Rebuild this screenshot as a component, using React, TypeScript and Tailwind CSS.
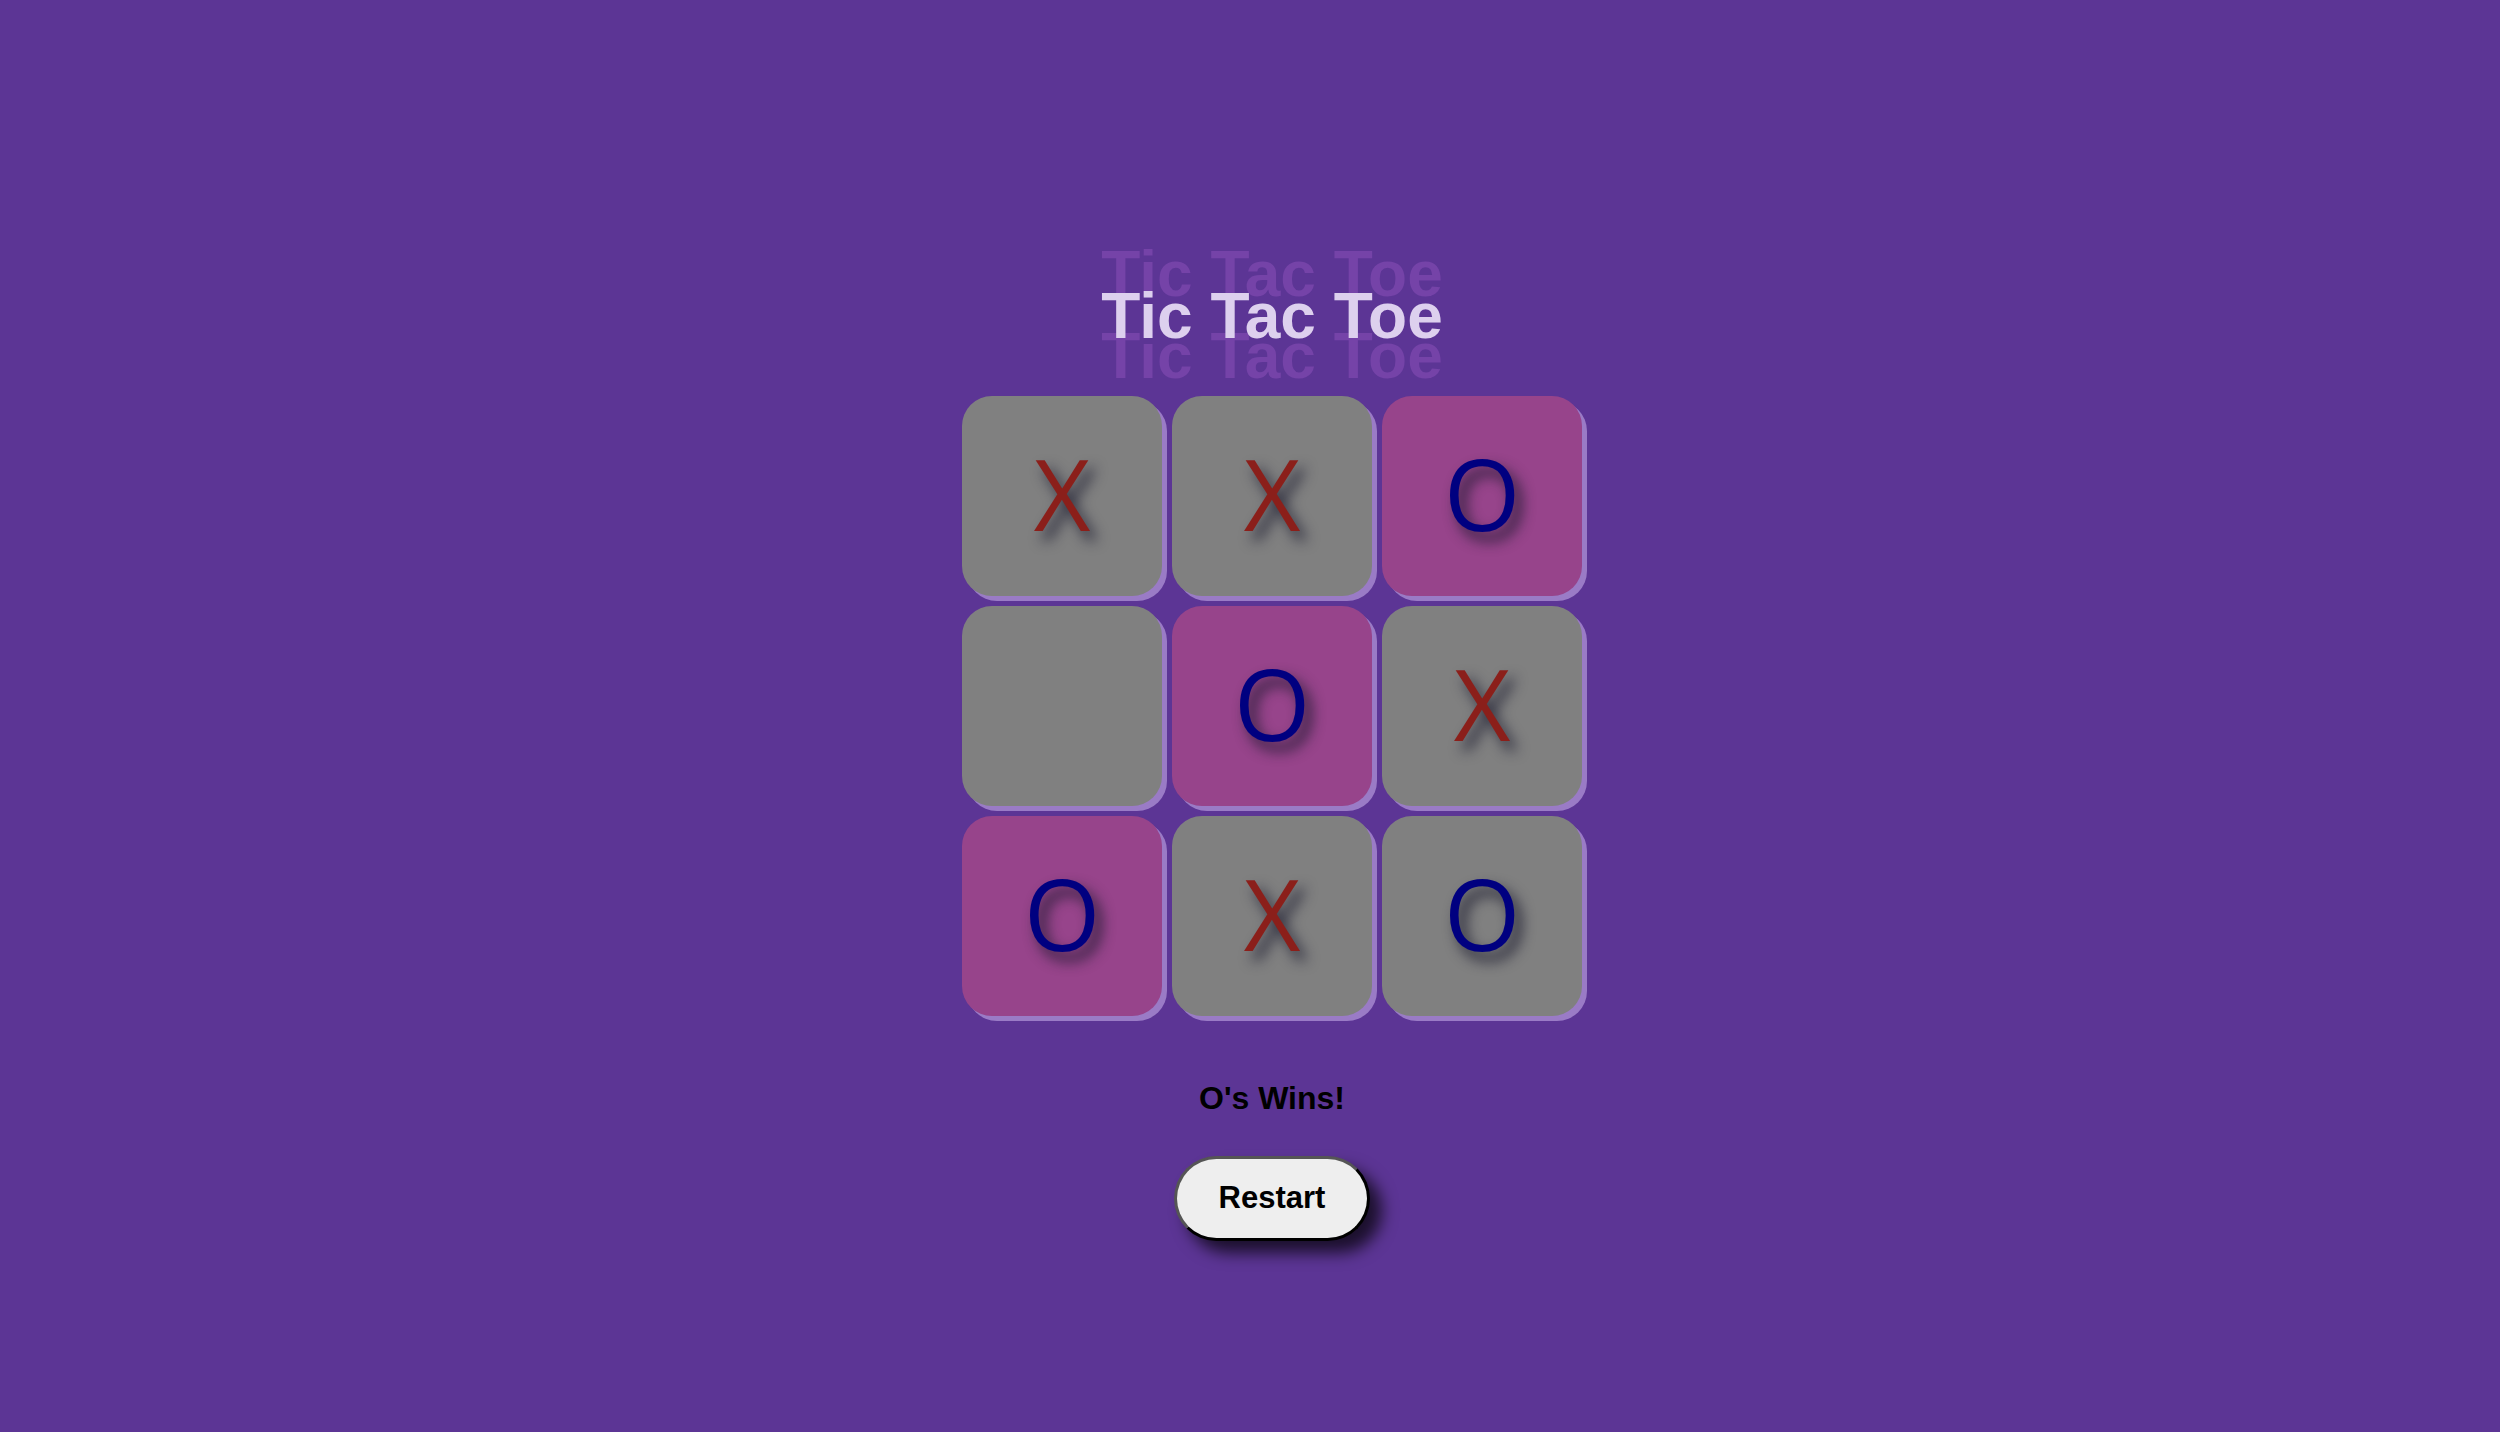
const board: (string | null)[] = ["X", "X", "O", null, "O", "X", "O", "X", "O"];
const winLine = [2, 4, 6];

function Cell({ value, win }: { value: string | null; win: boolean }) {
  return (
    <button
      className={`flex h-[200px] w-[200px] items-center justify-center rounded-[30px] pb-[6px] shadow-[5px_5px_0_#9a7bc6] ${
        win ? "bg-[#97448b]" : "bg-[#808080]"
      }`}
    >
      {value && (
        <span
          className={`font-['Open_Sans',sans-serif] text-[98px] leading-none [text-shadow:7px_9px_14px_rgba(25,25,45,0.9)] ${
            value === "X" ? "text-[#8b1f1a]" : "text-[#000080]"
          }`}
        >
          {value}
        </span>
      )}
    </button>
  );
}

export default function App() {
  return (
    <div className="min-h-screen bg-[#5c3595] font-['Liberation_Sans',Arial,sans-serif]">
      <div className="flex flex-col items-center pl-[44px] pt-[284px]">
        {/* Title with echo shadows */}
        <h1 className="text-[64px] font-bold leading-[64px] text-[#ddd0ee] [text-shadow:0_-42px_0_#7543a8,0_40px_0_#7543a8]">
          Tic Tac Toe
        </h1>

        {/* Board */}
        <div className="mt-12 grid grid-cols-3 gap-[10px]">
          {board.map((v, i) => (
            <Cell key={i} value={v} win={winLine.includes(i)} />
          ))}
        </div>

        <p className="mt-[66px] text-[32px] font-bold leading-[32px] text-black">O's Wins!</p>

        <button className="mt-[42px] h-[85px] w-[196px] rounded-full border-[3px] border-[#555] border-b-black border-r-black bg-[#eeeeee] text-[31px] font-bold text-black shadow-[12px_12px_16px_rgba(0,0,0,0.7)]">
          Restart
        </button>
      </div>
    </div>
  );
}
